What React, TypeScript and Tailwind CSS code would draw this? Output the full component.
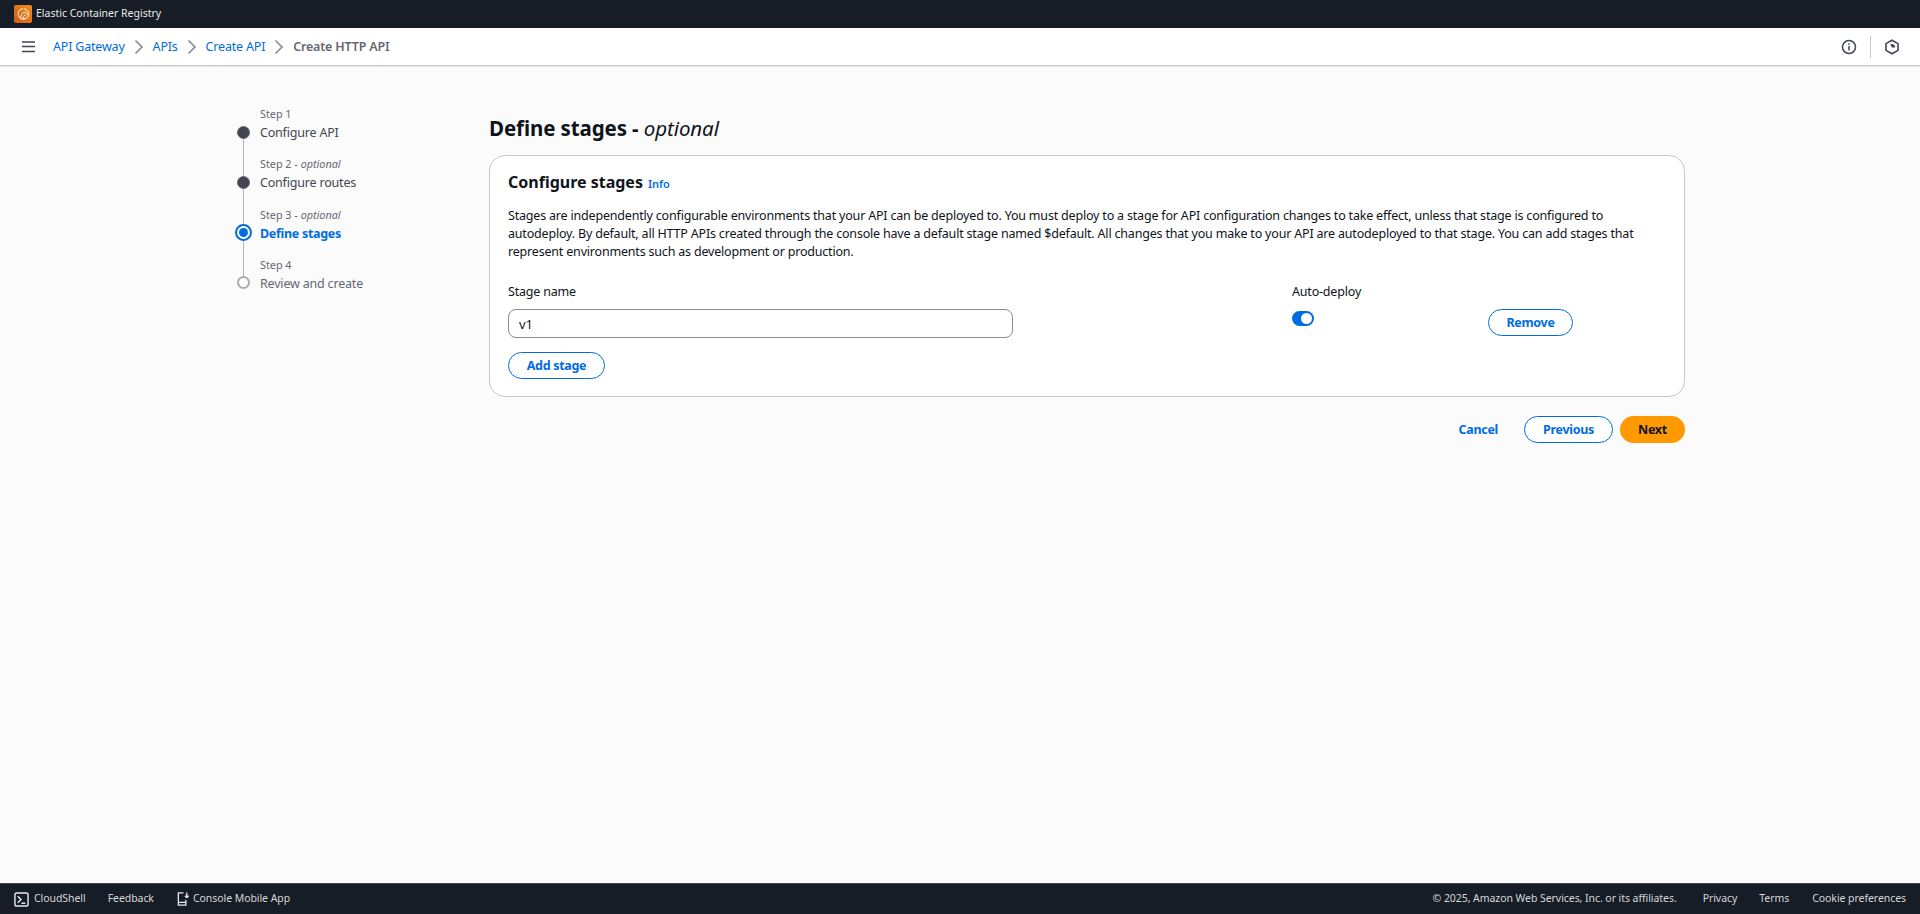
import { useState } from "react";

const steps = [
  { label: "Step 1", optional: false, title: "Configure API", state: "done" },
  { label: "Step 2", optional: true, title: "Configure routes", state: "done" },
  { label: "Step 3", optional: true, title: "Define stages", state: "active" },
  { label: "Step 4", optional: false, title: "Review and create", state: "todo" },
];

function Chevron() {
  return (
    <svg width="16" height="16" viewBox="0 0 16 16" fill="none" stroke="#8c8c94" strokeWidth="1.7" className="mx-[6px]">
      <path d="M4.5 1.5 11 8l-6.5 6.5" />
    </svg>
  );
}

function Dot({ state }: { state: string }) {
  if (state === "done") return <div className="h-[13px] w-[13px] rounded-full border border-[#656871] bg-[#424650] shrink-0" />;
  if (state === "active")
    return (
      <div className="h-[17px] w-[17px] rounded-full border-2 border-[#006ce0] bg-white flex items-center justify-center shrink-0">
        <div className="h-[9px] w-[9px] rounded-full bg-[#006ce0]" />
      </div>
    );
  return <div className="h-[13px] w-[13px] rounded-full border-2 border-[#a9acb3] bg-white shrink-0" />;
}

function OutlineButton({ children, className }: { children: string; className: string }) {
  return (
    <button className={"h-[27px] rounded-full border border-[#006ce0] bg-white pt-[2px] text-[12.5px] font-bold tracking-[-0.3px] text-[#006ce0] " + className}>
      {children}
    </button>
  );
}

export default function App() {
  const [stage, setStage] = useState("v1");
  return (
    <div className="flex h-[914px] flex-col overflow-hidden bg-[#fbfbfb] font-['Noto_Sans',sans-serif] text-[#0f141a]">
      <header className="flex h-[28px] items-center bg-[#161d26] pl-[14px] text-[10.5px] text-[#e8e9eb]">
        <div className="mr-[4px] flex h-[18px] w-[18px] items-center justify-center rounded-[2px] bg-gradient-to-tr from-[#d05c17] to-[#f58b1f]">
          <svg width="14" height="14" viewBox="0 0 16 16" fill="none" stroke="#fff" strokeWidth="1.1">
            <path d="M9 2a6 6 0 1 1-6.5 5.5C2.5 4.5 5 2 8 2M6 13.5C5 10 6.5 6.5 10 6c2.5 0 3 2 3 3M9 14c-1-2 0-5 2-5" />
          </svg>
        </div>
        <span>Elastic Container Registry</span>
      </header>

      <nav className="flex h-[38px] items-center border-b border-[#c6c6cd] bg-white text-[12.5px] tracking-[-0.19px] shadow-[0_1px_1px_#e9e9ed]">
        <svg width="14" height="12" viewBox="0 0 14 12" stroke="#424650" strokeWidth="1.5" className="ml-[22px] mr-[17px]">
          <path d="M0 1h13M0 5.5h13M0 10.5h13" />
        </svg>
        <a className="pt-px text-[#006ce0]">API Gateway</a>
        <Chevron />
        <a className="pt-px text-[#006ce0]">APIs</a>
        <Chevron />
        <a className="pt-px text-[#006ce0]">Create API</a>
        <Chevron />
        <span className="pt-px font-semibold text-[#656871]">Create HTTP API</span>
        <div className="ml-auto flex items-center pr-[20px]">
          <svg width="16" height="16" viewBox="0 0 16 16" fill="none" stroke="#424650" strokeWidth="1.5">
            <circle cx="8" cy="8" r="6.5" />
            <path d="M8 7v4.5M8 4.2v1.6" />
          </svg>
          <div className="mx-[13px] h-[22px] w-px bg-[#c6c6cd]" />
          <svg width="16" height="16" viewBox="0 0 16 16" fill="none" stroke="#424650" strokeWidth="1.6">
            <path d="M8 1.2 14 4.6v6.8l-6 3.4-6-3.4V4.6Z" />
            <path d="M8 8.5 6.2 5.6A3.2 3.2 0 0 1 11.2 8.5Z" fill="#424650" stroke="none" />
          </svg>
        </div>
      </nav>

      <main className="flex flex-1 items-start pl-[234px] pt-[38px]">
        <ol className="w-[255px] shrink-0">
          {steps.map((s, i) => (
            <li key={s.label} className="flex h-[50.3px]">
              <div className="flex w-[18px] shrink-0 flex-col items-center pl-px">
                <div className={s.state === "active" ? "h-[19.5px]" : "h-[21.5px]"}>
                  {i > 0 && <div className="mx-auto h-full w-px bg-[#b4b4bb]" />}
                </div>
                <Dot state={s.state} />
                {i < steps.length - 1 && <div className="w-px flex-1 bg-[#b4b4bb]" />}
              </div>
              <div className="pl-[8px] pt-px">
                <div className="h-[18px] text-[10.8px] leading-[18px] text-[#656871]">
                  {s.label}
                  {s.optional && (
                    <>
                      {" - "}
                      <i>optional</i>
                    </>
                  )}
                </div>
                <div
                  className={
                    "text-[12.5px] leading-[20px] " +
                    (s.state === "active"
                      ? "font-bold tracking-[-0.3px] text-[#006ce0]"
                      : s.state === "todo"
                        ? "tracking-[-0.19px] text-[#656871]"
                        : "tracking-[-0.19px] text-[#424650]")
                  }
                >
                  {s.title}
                </div>
              </div>
            </li>
          ))}
        </ol>

        <div className="w-[1196px] pt-[12px]">
          <h1 className="text-[20.5px] font-bold leading-[24px] tracking-[-0.1px]">
            Define stages - <i className="font-normal">optional</i>
          </h1>
          <section className="mt-[15px] h-[242px] rounded-[16px] border border-[#c6c6cd] bg-white px-[18px] pt-[14px]">
            <div className="flex items-baseline">
              <h2 className="text-[16px] font-bold leading-[24px]">Configure stages</h2>
              <a className="ml-[5px] text-[11px] font-semibold text-[#006ce0]">Info</a>
            </div>
            <p className="mt-[13px] whitespace-nowrap text-[12.5px] leading-[18px] tracking-[-0.19px]">
              Stages are independently configurable environments that your API can be deployed to. You must deploy to a stage for API configuration changes to take effect, unless that stage is configured to
              <br />
              autodeploy. By default, all HTTP APIs created through the console have a default stage named $default. All changes that you make to your API are autodeployed to that stage. You can add stages that
              <br />
              represent environments such as development or production.
            </p>
            <div className="mt-[22px] flex items-start text-[12.5px] tracking-[-0.19px]">
              <div className="w-[784px]">
                <label className="block leading-[18px]">Stage name</label>
                <input
                  value={stage}
                  onChange={(e) => setStage(e.target.value)}
                  className="mt-[8px] block h-[29px] w-[505px] rounded-[8px] border border-[#8c8c94] bg-white px-[10px] text-[13px] outline-none"
                />
                <OutlineButton className="mt-[14px] block w-[97px]">Add stage</OutlineButton>
              </div>
              <div className="w-[196px]">
                <div className="leading-[18px]">Auto-deploy</div>
                <div className="mt-[10px] flex h-[15px] w-[22px] items-center justify-end rounded-full bg-[#006ce0] pr-[2px]">
                  <div className="h-[11px] w-[11px] rounded-full bg-white" />
                </div>
              </div>
              <OutlineButton className="mt-[26px] w-[85px]">Remove</OutlineButton>
            </div>
          </section>
          <div className="mt-[19px] flex items-center justify-end">
            <a className="pt-[2px] text-[12.5px] font-bold tracking-[-0.3px] text-[#006ce0]">Cancel</a>
            <OutlineButton className="ml-[26px] w-[89px]">Previous</OutlineButton>
            <button className="ml-[7px] h-[27px] w-[65px] rounded-full bg-[#ff9900] pt-[2px] text-[12.5px] font-bold tracking-[-0.3px] text-[#0f141a]">Next</button>
          </div>
        </div>
      </main>

      <footer className="flex h-[31px] items-center border-t border-[#424650] bg-[#161d26] px-[14px] text-[10.5px] tracking-[-0.06px] text-[#d5d6d9]">
        <svg width="15" height="15" viewBox="0 0 16 16" fill="none" stroke="#e8e9eb" strokeWidth="1.5" className="mr-[5px]">
          <rect x="1" y="1" width="14" height="14" rx="2" />
          <path d="M4 4.5 7.5 8 4 11.5M8 12h4" />
        </svg>
        <span>CloudShell</span>
        <span className="ml-[22px]">Feedback</span>
        <svg width="15" height="16" viewBox="0 0 16 16" fill="none" stroke="#e8e9eb" strokeWidth="1.4" className="ml-[22px] mr-[2px]">
          <path d="M8 1.5H2.5v13h8V9M2.5 11.5h8M11.5 1v5.5M9.5 4.5l2 2 2-2" />
        </svg>
        <span>Console Mobile App</span>
        <span className="ml-auto">© 2025, Amazon Web Services, Inc. or its affiliates.</span>
        <span className="ml-[26px]">Privacy</span>
        <span className="ml-[22px]">Terms</span>
        <span className="ml-[23px]">Cookie preferences</span>
      </footer>
    </div>
  );
}
